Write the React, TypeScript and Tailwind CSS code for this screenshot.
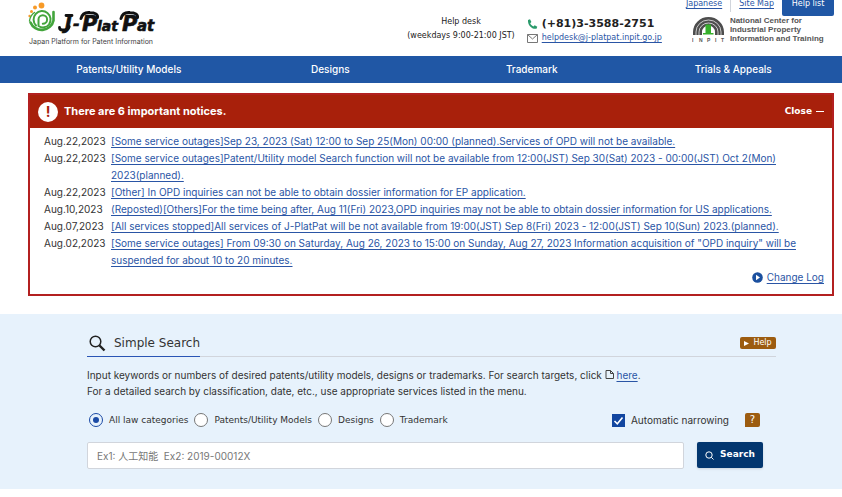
import type { ReactNode } from "react";

const menu = ["Patents/Utility Models", "Designs", "Trademark", "Trials & Appeals"];

const notices = [
  {
    date: "Aug.22,2023",
    text: "[Some service outages]Sep 23, 2023 (Sat) 12:00 to Sep 25(Mon) 00:00 (planned).Services of OPD will not be available.",
  },
  {
    date: "Aug.22,2023",
    text: "[Some service outages]Patent/Utility model Search function will not be available from 12:00(JST) Sep 30(Sat) 2023 - 00:00(JST) Oct 2(Mon) 2023(planned).",
  },
  {
    date: "Aug.22,2023",
    text: "[Other] In OPD inquiries can not be able to obtain dossier information for EP application.",
  },
  {
    date: "Aug.10,2023",
    text: "(Reposted)[Others]For the time being after, Aug 11(Fri) 2023,OPD inquiries may not be able to obtain dossier information for US applications.",
  },
  {
    date: "Aug.07,2023",
    text: "[All services stopped]All services of J-PlatPat will be not available from 19:00(JST) Sep 8(Fri) 2023 - 12:00(JST) Sep 10(Sun) 2023.(planned).",
  },
  {
    date: "Aug.02,2023",
    text: '[Some service outages] From 09:30 on Saturday, Aug 26, 2023 to 15:00 on Sunday, Aug 27, 2023 Information acquisition of "OPD inquiry" will be suspended for about 10 to 20 minutes.',
  },
];

const categories = ["All law categories", "Patents/Utility Models", "Designs", "Trademark"];

function TextLink({ children }: { children: ReactNode }) {
  return (
    <a href="#" className="text-[#2a55a5] underline underline-offset-2">
      {children}
    </a>
  );
}

function Logo() {
  return (
    <a href="#" className="block" aria-label="J-PlatPat home">
      <svg width="136" height="48" viewBox="0 0 136 48" className="block">
        <g fill="#f79a28">
          <circle cx="13.500" cy="5.500" r="2.900" />
          <circle cx="7" cy="7.500" r="2" />
          <circle cx="3.500" cy="11.500" r="1.500" />
          <circle cx="1.600" cy="16" r="1.200" />
        </g>
        <g fill="none" stroke="#43a53c" strokeLinecap="round">
          <path d="M25.500 12v8.500a12 11.500 0 0 1-23 2" strokeWidth="2.600" />
          <path d="M1.500 21a12 12 0 0 1 5-8.500" strokeWidth="1.400" />
          <path d="M8 25.500a8.500 8.500 0 1 1 13-1c-2.500 3.300-7 3.800-10.500 1.500" strokeWidth="2" />
          <path d="M10.500 25v-5.500a4.300 4.300 0 1 1 4.300 4.300" strokeWidth="2" />
        </g>
        <g fill="#111" stroke="#111" strokeWidth=".6" fontFamily="DejaVu Sans" fontWeight="700" fontStyle="oblique">
          <text x="37" y="29" fontSize="18">J</text>
          <text x="45" y="29" fontSize="16">-</text>
          <text x="54" y="31" fontSize="21">P</text>
          <text x="69" y="31" fontSize="14">lat</text>
          <text x="94" y="31" fontSize="21">P</text>
          <text x="109" y="31" fontSize="15">at</text>
        </g>
        <g fill="none" stroke="#111" strokeLinecap="round" strokeLinejoin="round">
          <path d="M31.500 27.500c0 2 1 2.500 3 2.500h2c3 0 4-1 4.700-3.500M38 15.500h6" strokeWidth="2.800" />
          <path d="M53 18.500c1-4 4-6.500 9-6 5 0 8 2 7.500 5" strokeWidth="3" />
          <path d="M93 18.500c1-4 4-6.500 9-6 5 0 8 2 7.500 5" strokeWidth="3" />
        </g>
        <text x="1" y="44" fontSize="7" fontFamily="Inter" fill="#444">
          Japan Platform for Patent Information
        </text>
      </svg>
    </a>
  );
}

function InpitMark() {
  return (
    <svg width="34" height="27" viewBox="0 0 34 27" className="block" aria-hidden>
      <path d="M1 19v-3a15.500 15 0 0 1 31 0v3h-9v-3a6.500 6.500 0 0 0-13 0v3z" fill="#4d4d4d" />
      <g fill="none" stroke="#fff" strokeWidth=".7">
        <path d="M4 19v-3a12.500 12 0 0 1 25 0v3" />
        <path d="M7 19v-3a9.500 9 0 0 1 19 0v3" />
      </g>
      <path d="M13.500 8.500h5.500v8.500h2.500v1.500h-10.500v-1.500h2.500z" fill="#36b02c" />
      <g fontSize="5" fontFamily="Liberation Sans" fontWeight="700" fill="#555">
        <text x="0" y="26">I</text>
        <text x="7" y="26">N</text>
        <text x="15" y="26">P</text>
        <text x="23" y="26">I</text>
        <text x="29" y="26">T</text>
      </g>
    </svg>
  );
}

function Header() {
  return (
    <header className="flex h-14 justify-between pl-7 pr-2">
      <Logo />
      <div className="flex">
        <div className="mr-3 pt-[15px] text-center text-[8px] leading-[14px] text-[#222]">
          <p>Help desk</p>
          <p>(weekdays 9:00-21:00 JST)</p>
        </div>
        <div className="mr-6 grid grid-cols-[auto_auto] content-start items-center gap-x-1 pt-4">
          <svg width="11" height="11" viewBox="0 0 11 11" aria-hidden>
            <path
              d="M1 1l2-.7 1.400 2.700-1.200 1.200c.5 1.400 1.600 2.500 3.200 3.200l1.300-1.200 2.600 1.500-.8 2C5 10.500.5 6.500 1 1z"
              fill="#2a9a6b"
            />
          </svg>
          <p className="text-[11px] leading-4 font-bold text-[#222]">(+81)3-3588-2751</p>
          <svg width="11" height="9" viewBox="0 0 11 9" fill="none" stroke="#777" aria-hidden>
            <path d="M.5.500h10v8H.5zM.5.500l5 4.500 5-4.500" />
          </svg>
          <p className="text-[8px] leading-3">
            <TextLink>helpdesk@j-platpat.inpit.go.jp</TextLink>
          </p>
        </div>
        <div>
          <div className="flex h-4 justify-end text-[8px] leading-2">
            <TextLink>Japanese</TextLink>
            <span className="mx-2 h-3 w-px bg-gray-300" />
            <TextLink>Site Map</TextLink>
            <button className="ml-2 h-4 w-13 rounded-b-xs bg-[#2057a5] pb-2 text-white">
              Help list
            </button>
          </div>
          <div className="flex gap-1 pl-[6px]">
            <InpitMark />
            <p className="font-['Liberation_Sans'] text-[8px] leading-[9px] font-bold text-[#555]">
              National Center for
              <br />
              Industrial Property
              <br />
              Information and Training
            </p>
          </div>
        </div>
      </div>
    </header>
  );
}

function Notices() {
  return (
    <section className="mt-[10px] mr-2 ml-7 border-2 border-[#b32020]">
      <div className="flex h-[33px] items-center justify-between bg-[#a8200b] px-2 text-white">
        <h2 className="flex items-center gap-[6px] font-['Inter'] text-[11px] font-bold">
          <span className="flex size-5 items-center justify-center rounded-full bg-white text-sm text-[#a8200b]">
            !
          </span>
          There are 6 important notices.
        </h2>
        <button className="flex items-center gap-1 text-[9px] font-bold">
          Close
          <span className="h-px w-2 bg-white" />
        </button>
      </div>
      <ul className="pt-[5px] pr-4 pl-[14px] font-['Inter'] text-[10px] leading-[17px]">
        {notices.map((n) => (
          <li key={n.text} className="flex">
            <time className="w-[67px] shrink-0 text-[#333]">{n.date}</time>
            <p className="min-w-0 flex-1">
              <TextLink>{n.text}</TextLink>
            </p>
          </li>
        ))}
      </ul>
      <div className="flex items-center justify-end gap-1 pr-2 pb-2 font-['Inter'] text-[10px] leading-[17px]">
        <svg width="11" height="11" viewBox="0 0 11 11" aria-hidden>
          <circle cx="5.500" cy="5.500" r="5.300" fill="#1b509f" />
          <path d="M4 2.700l4 2.800-4 2.800z" fill="#fff" />
        </svg>
        <TextLink>Change Log</TextLink>
      </div>
    </section>
  );
}

function SimpleSearch() {
  return (
    <section className="mt-[18px] bg-[#e7f2fc] pt-4 pr-[66px] pb-5 pl-[87px] text-[#333]">
      <div className="flex items-center justify-between border-b border-gray-300">
        <h2 className="-mb-px flex h-[27px] items-center gap-2 border-b border-[#2a55b5] text-xs">
          <svg width="17" height="17" viewBox="0 0 17 17" fill="none" stroke="#222" className="ml-[2px]" aria-hidden>
            <circle cx="6.500" cy="6.500" r="5.300" strokeWidth="1.500" />
            <path d="M10.500 10.500l5 5" strokeWidth="2.400" />
          </svg>
          Simple Search
        </h2>
        <button className="flex h-3 w-9 items-center justify-center gap-1 rounded-xs bg-[#9c5c10] text-[8px] text-white">
          <svg width="5" height="5" viewBox="0 0 5 5" aria-hidden>
            <path d="M0 0l5 2.500-5 2.500z" fill="#fff" />
          </svg>
          Help
        </button>
      </div>

      <p className="mt-[10px] font-['Inter'] text-[10px] leading-4">
        Input keywords or numbers of desired patents/utility models, designs or trademarks. For
        search targets, click{" "}
        <svg width="9" height="9" viewBox="0 0 9 9" fill="none" stroke="#444" className="inline align-baseline" aria-hidden>
          <path d="M1 .500h4.500l3 3v5H1zM5.500.500v3h3" />
        </svg>{" "}
        <TextLink>here</TextLink>.
        <br />
        For a detailed search by classification, date, etc., use appropriate services listed in the
        menu.
      </p>

      <div className="mt-[13px] flex items-center justify-between pr-4 text-[9px] leading-4">
        <div className="flex gap-[6px] pl-[2px]">
          {categories.map((c, i) => (
            <label key={c} className="flex items-center gap-[6px]">
              <input
                type="radio"
                name="category"
                defaultChecked={i === 0}
                className="size-[14px] appearance-none rounded-full border border-[#777] bg-white p-[3px] checked:border-[#1b4aa5] checked:bg-[#1b4aa5] checked:bg-clip-content"
              />
              {c}
            </label>
          ))}
        </div>
        <div className="flex items-center gap-4">
          <label className="flex items-center gap-[6px] font-['Inter'] text-[10px]">
            <span className="grid">
              <input
                type="checkbox"
                defaultChecked
                className="peer col-start-1 row-start-1 size-[13px] appearance-none border border-[#1246a0] bg-white checked:bg-[#1246a0]"
              />
              <svg
                width="13"
                height="13"
                viewBox="0 0 13 13"
                fill="none"
                stroke="#fff"
                strokeWidth="1.600"
                className="pointer-events-none invisible col-start-1 row-start-1 peer-checked:visible"
                aria-hidden
              >
                <path d="M2.500 7l2.800 2.800 5.200-6.300" />
              </svg>
            </span>
            Automatic narrowing
          </label>
          <button className="h-[14px] w-[15px] rounded-xs rounded-bl-none bg-[#9c5c10] text-[10px] leading-[14px] text-white">
            ?
          </button>
        </div>
      </div>

      <form className="mt-[14px] flex gap-[13px] pr-[13px]" onSubmit={(e) => e.preventDefault()}>
        <input
          type="text"
          aria-label="Keywords"
          placeholder="Ex1: 人工知能  Ex2: 2019-00012X"
          className="h-[27px] min-w-0 flex-1 rounded-xs border border-gray-300 bg-white px-[9px] font-['Inter','Noto_Sans_CJK_JP',sans-serif] text-[10px] placeholder:text-[#777]"
        />
        <button className="flex h-[26px] w-[66px] items-center justify-center gap-[6px] rounded-xs bg-[#02366f] text-[9px] font-bold text-white shadow-sm">
          <svg width="9" height="9" viewBox="0 0 9 9" fill="none" stroke="#fff" aria-hidden>
            <circle cx="4" cy="4" r="3.200" />
            <path d="M6.300 6.300l2.200 2.200" />
          </svg>
          Search
        </button>
      </form>
    </section>
  );
}

export default function App() {
  return (
    <div className="bg-white font-['DejaVu_Sans','Noto_Sans_CJK_JP',sans-serif]">
      <Header />
      <nav className="grid h-[27px] grid-cols-4 items-center bg-[#2057a5] pr-2 pl-7 text-center font-['Inter'] text-[10px] font-medium text-white">
        {menu.map((m) => (
          <a key={m} href="#">
            {m}
          </a>
        ))}
      </nav>
      <main>
        <Notices />
        <SimpleSearch />
      </main>
    </div>
  );
}
